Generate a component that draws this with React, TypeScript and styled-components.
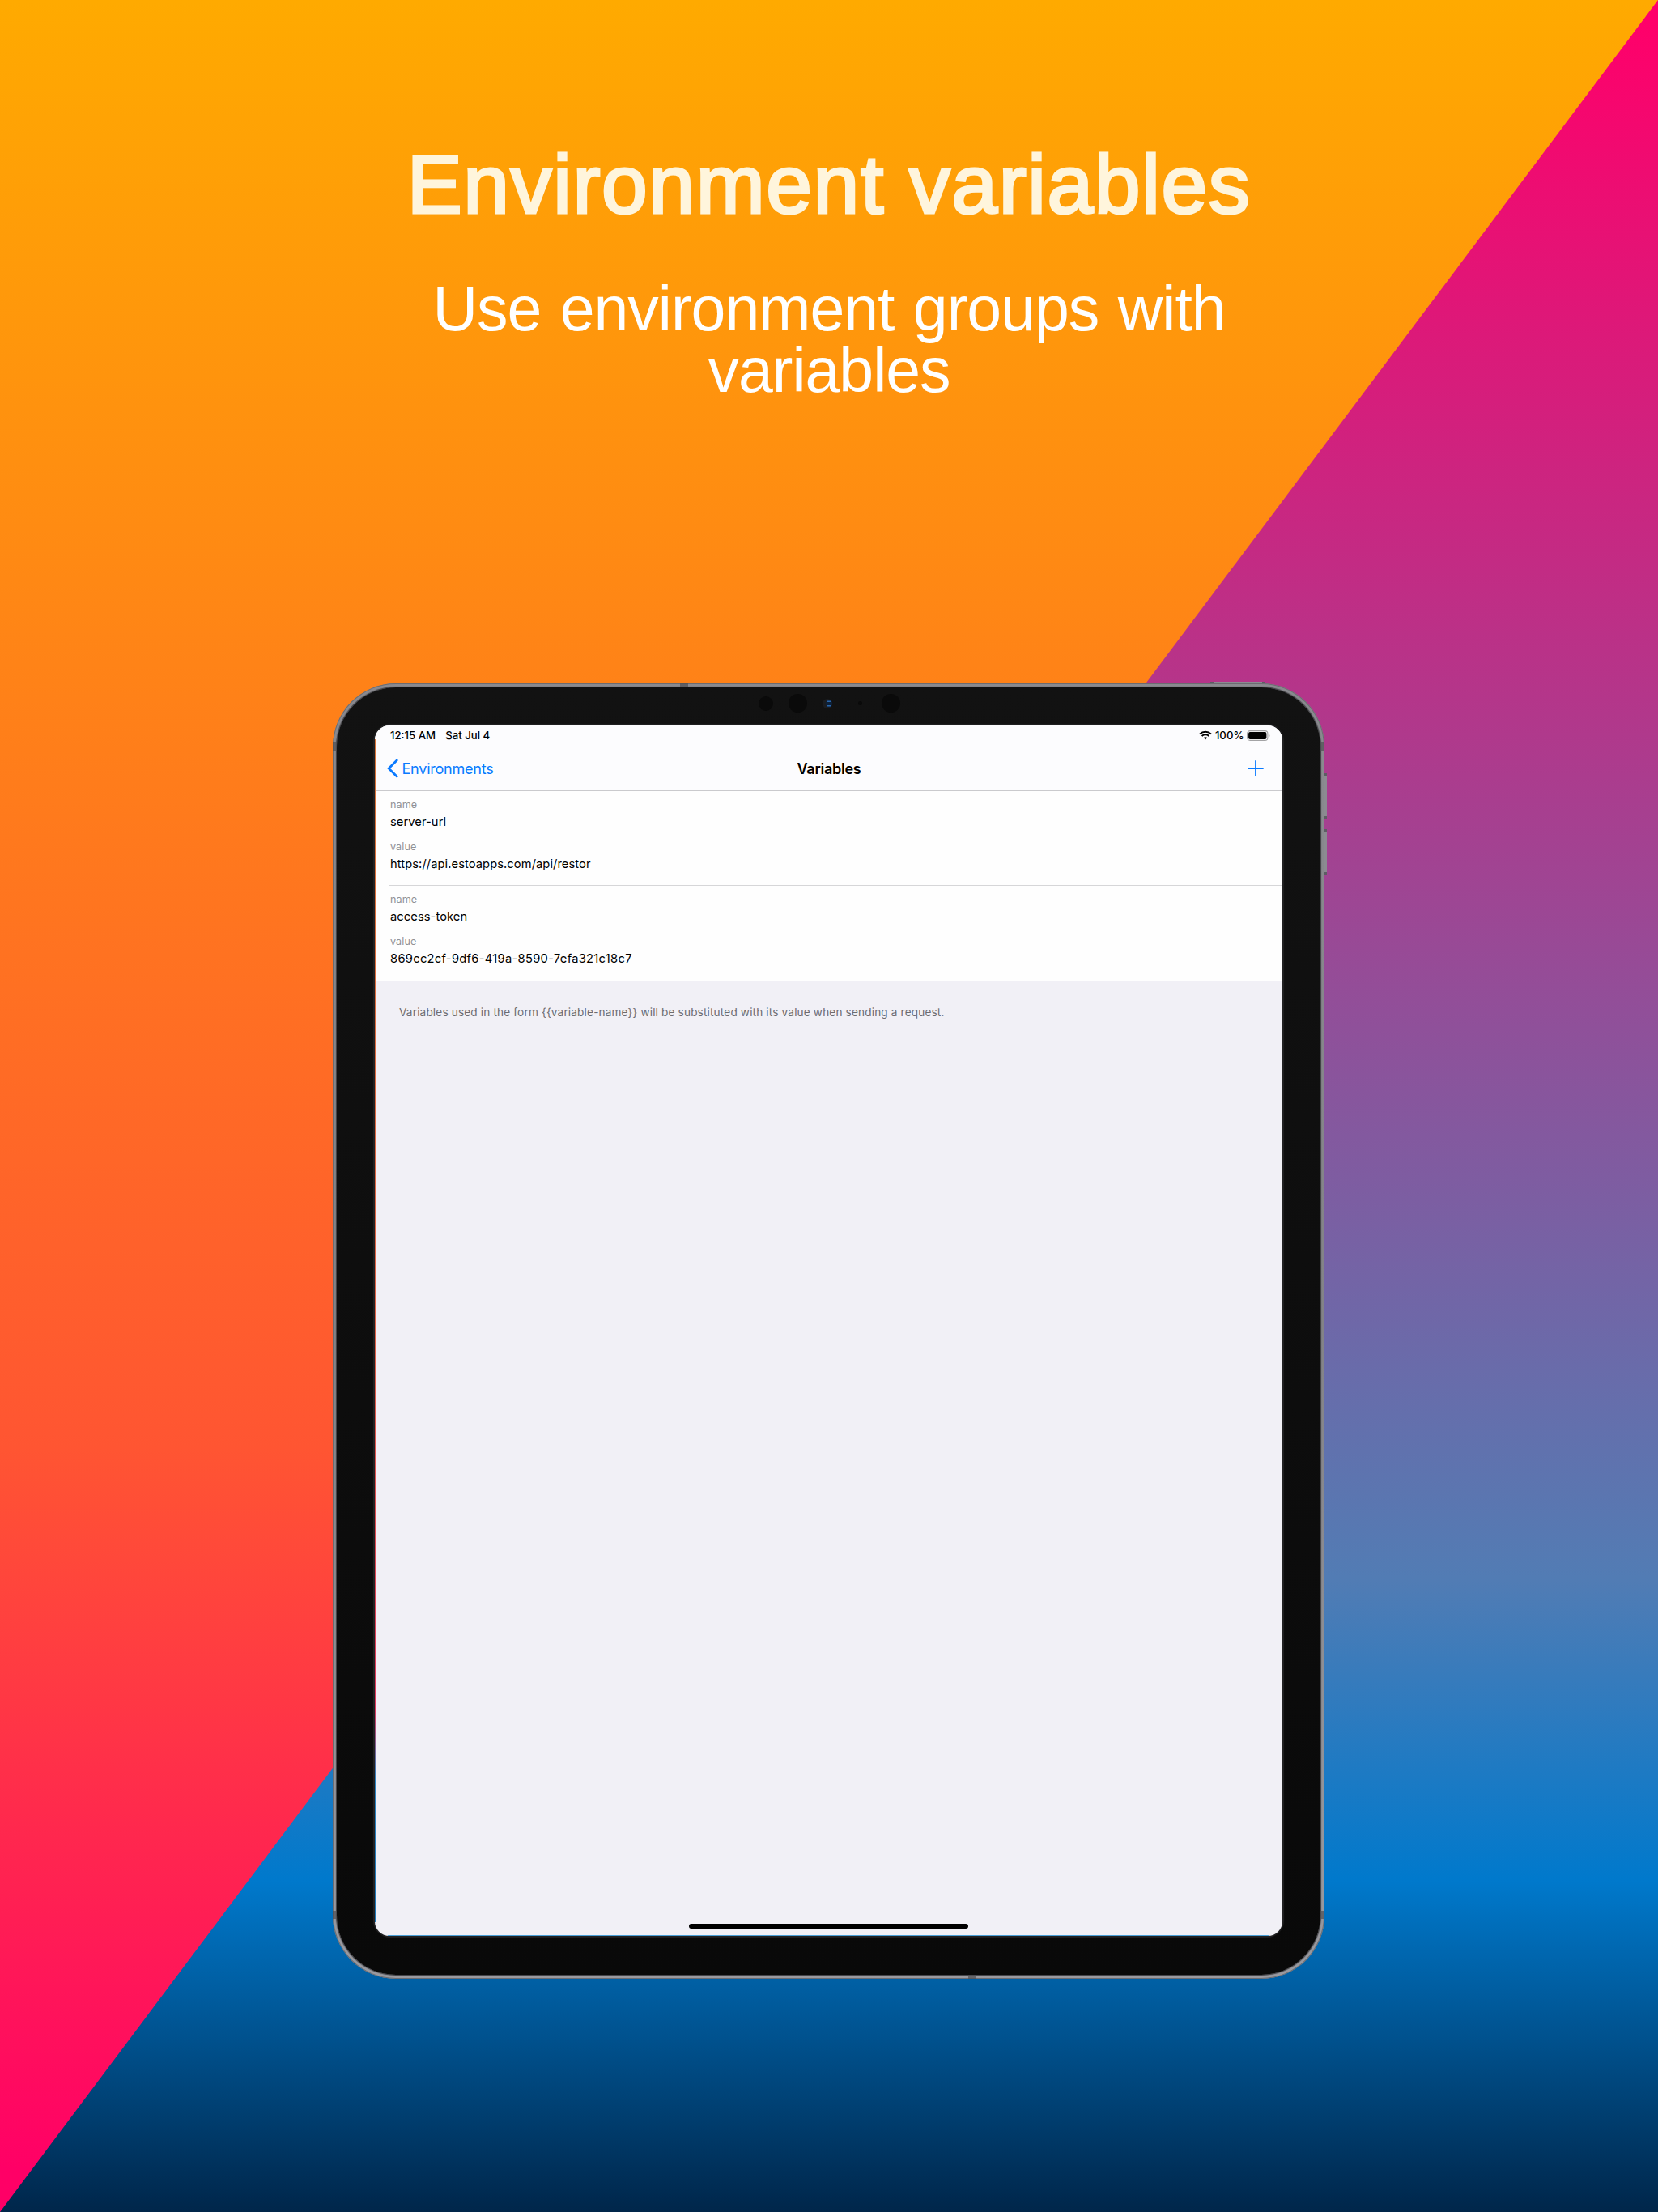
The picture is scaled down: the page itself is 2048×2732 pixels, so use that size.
import React from 'react';
import styled, { createGlobalStyle } from 'styled-components';

const Global = createGlobalStyle`
  *, *::before, *::after { box-sizing: border-box; }
  body { margin: 0; }
`;

const ui = `Inter, "Liberation Sans", sans-serif`;

const Poster = styled.main`
  position: relative;
  width: 2048px;
  height: 2732px;
  overflow: hidden;
  display: flex;
  flex-direction: column;
  align-items: center;
  background: linear-gradient(180deg, #ff006a 0%, #ff006a 1%, #527cb4 71.3%, #0079cc 85%, #00264a 100%);
`;

const Sunset = styled.div`
  position: absolute;
  inset: 0;
  background: linear-gradient(180deg, #ffaa00 0%, #ff5532 65.5%, #ff0066 98%);
  clip-path: polygon(0 0, 100% 0, 0 100%);
`;

const Copy = styled.header`
  position: relative;
  width: 1100px;
  height: 844px;
  padding-top: 169px;
  text-align: center;
  font-family: "Liberation Sans", Arial, sans-serif;
`;

const Title = styled.h1`
  margin: 0;
  font-size: 102px;
  line-height: 118px;
  font-weight: 400;
  letter-spacing: 1.6px;
  white-space: nowrap;
  color: #fff5dc;
  -webkit-text-stroke: 3.2px #fff5dc;
`;

const Subtitle = styled.p`
  margin: 56px 0 0;
  font-size: 77px;
  line-height: 76px;
  letter-spacing: -1px;
  word-spacing: 3px;
  color: #fff;
`;

const Tablet = styled.section`
  position: relative;
  width: 1225px;
  height: 1600px;
  flex: none;
  margin-right: 1px;
  padding: 5px;
  border-radius: 78px;
  background: linear-gradient(180deg, #8a8a8f, #828287 50%, #9a9aa0);
  box-shadow: inset 0 0 0 1px #6c6c71;
`;

const Bezel = styled.div`
  height: 100%;
  padding: 47px 47px 48px;
  border-radius: 73px;
  background: linear-gradient(180deg, #121212, #090909);
  box-shadow: 0 0 1px 1px #3c3c40;
`;

const Screen = styled.div`
  position: relative;
  height: 100%;
  display: flex;
  flex-direction: column;
  border-radius: 18px;
  overflow: hidden;
  background: #f1f0f6;
  font-family: ${ui};
  color: #000;

  &::before,
  &::after {
    content: '';
    position: absolute;
    left: 0;
    bottom: 0;
  }

  &::before {
    top: 17px;
    bottom: 17px;
    width: 1px;
    background: linear-gradient(180deg, #d9753a 0%, #e0634a 50%, #e03a60 82%, #2f86c4 88%, #1f78b8 100%);
  }

  &::after {
    left: 16px;
    right: 16px;
    height: 1px;
    background: #4aa0d8;
  }
`;

const ScreenRim = styled.div`
  height: 100%;
  border-radius: 19px;
  box-shadow: 0 0 1px 2px #222223;
`;

const StatusBar = styled.div`
  height: 26px;
  padding: 0 15px 2px 19px;
  display: flex;
  align-items: center;
  background: #fcfcfe;
  font-size: 13.2px;
  line-height: 16px;
  font-weight: 500;
`;

const Clock = styled.span`
  margin-right: 12px;
`;

const StatusIcons = styled.div`
  margin-left: auto;
  display: flex;
  align-items: center;
  gap: 3.5px;
`;

const NavBar = styled.nav`
  height: 55px;
  padding: 0 15px;
  display: grid;
  grid-template-columns: 1fr auto 1fr;
  align-items: center;
  background: #fcfcfe;
  border-bottom: 1px solid #cacacd;
`;

const Back = styled.div`
  display: flex;
  align-items: center;
  gap: 4.5px;
  color: #0a7aff;
  font-size: 18px;
  letter-spacing: -0.22px;
`;

const NavTitle = styled.h2`
  margin: 0;
  padding-left: 1px;
  font-size: 18px;
  font-weight: 600;
  letter-spacing: -0.25px;
`;

const Add = styled.div`
  display: flex;
  justify-content: flex-end;
  margin-right: 8px;
`;

const List = styled.ul`
  margin: 0;
  padding: 0 0 0 18px;
  list-style: none;
  background: #fefefe;
`;

const Item = styled.li<{ $last?: boolean }>`
  height: ${(p) => (p.$last ? 118 : 117)}px;
  padding-top: 7px;
  border-bottom: ${(p) => (p.$last ? 'none' : '1px solid #d6d6d8')};
`;

const Label = styled.div`
  height: 20px;
  padding-left: 1px;
  line-height: 20px;
  font-size: 12.6px;
  letter-spacing: 0.1px;
  color: #929296;
`;

const Value = styled.div<{ $spacing?: number }>`
  height: 32px;
  padding-left: 1px;
  line-height: 23px;
  font-size: 14.7px;
  letter-spacing: ${(p) => p.$spacing ?? 0.08}px;
`;

const Note = styled.p`
  margin: 28px 0 0 30px;
  font-size: 13.6px;
  line-height: 20px;
  letter-spacing: 0.16px;
  color: #6c6c71;
`;

const HomeBar = styled.div`
  width: 345px;
  height: 6px;
  margin: auto auto 9px;
  border-radius: 3px;
  background: #000;
`;

const Button = styled.i<{ $side: 'top' | 'right'; $at: number; $len: number }>`
  position: absolute;
  background: #8b8b91;
  border: 0 solid #5d5d63;
  ${(p) =>
    p.$side === 'top'
      ? `top: -2px; left: ${p.$at}px; width: ${p.$len}px; height: 2px; border-width: 0 4px;`
      : `right: -3px; top: ${p.$at}px; height: ${p.$len}px; width: 3px; border-width: 4px 0;`}
`;

const Antenna = styled.i<{ $x: number; $y: number; $w: number; $h: number }>`
  position: absolute;
  left: ${(p) => p.$x}px;
  top: ${(p) => p.$y}px;
  width: ${(p) => p.$w}px;
  height: ${(p) => p.$h}px;
  background: rgba(78, 78, 83, 0.7);
`;

const Sensor = styled.i<{ $x: number; $d: number }>`
  position: absolute;
  left: ${(p) => p.$x - p.$d / 2}px;
  top: ${(p) => 24.5 - p.$d / 2}px;
  width: ${(p) => p.$d}px;
  height: ${(p) => p.$d}px;
  border-radius: 50%;
  background: #0a0a0a;
`;

const CameraSvg = styled.svg`
  position: absolute;
  left: 605px;
  top: 18px;
`;

const variables = [
  { name: 'server-url', value: 'https://api.estoapps.com/api/restor' },
  { name: 'access-token', value: '869cc2cf-9df6-419a-8590-7efa321c18c7', spacing: 0.3 },
];

const Wifi = () => (
  <svg width="16" height="12" viewBox="0 0 16 12" fill="none" stroke="#000" strokeWidth="2">
    <path d="M1.1 4.4C5 .8 11 .8 14.9 4.4" />
    <path d="M3.6 7c2.5-2.3 6.3-2.3 8.8 0" />
    <path d="M8 11.4 5.7 9.1c1.3-1.1 3.3-1.1 4.6 0z" fill="#000" stroke="none" />
  </svg>
);

const Battery = () => (
  <svg width="29" height="13" viewBox="0 0 29 13">
    <rect x=".6" y=".6" width="25.3" height="11.8" rx="3.4" fill="none" stroke="#a3a3a5" strokeWidth="1.1" />
    <rect x="2.1" y="2.1" width="22.3" height="8.8" rx="1.9" />
    <path d="M27.2 4.4c1.7.6 1.7 3.6 0 4.2z" fill="#a3a3a5" />
  </svg>
);

export default function App() {
  return (
    <Poster>
      <Global />
      <Sunset />
      <Copy>
        <Title>Environment variables</Title>
        <Subtitle>Use environment groups with variables</Subtitle>
      </Copy>
      <Tablet>
        <Button $side="top" $at={1084} $len={68} />
        <Button $side="right" $at={111} $len={57} />
        <Button $side="right" $at={180} $len={57} />
        <Bezel>
          <ScreenRim>
            <Screen>
              <StatusBar>
                <Clock>12:15 AM</Clock>
                <span>Sat Jul 4</span>
                <StatusIcons>
                  <Wifi />
                  <span>100%</span>
                  <Battery />
                </StatusIcons>
              </StatusBar>
              <NavBar>
                <Back>
                  <svg width="14" height="24" viewBox="0 0 14 24" fill="none" stroke="#0a7aff" strokeWidth="2.8" strokeLinecap="round">
                    <path d="M12.2 2 2.2 12l10 10" />
                  </svg>
                  Environments
                </Back>
                <NavTitle>Variables</NavTitle>
                <Add>
                  <svg width="20" height="20" viewBox="0 0 20 20" stroke="#0a7aff" strokeWidth="1.8" strokeLinecap="round">
                    <path d="M10 1v18M1 10h18" />
                  </svg>
                </Add>
              </NavBar>
              <List>
                {variables.map((v, i) => (
                  <Item key={v.name} $last={i === variables.length - 1}>
                    <Label>name</Label>
                    <Value>{v.name}</Value>
                    <Label>value</Label>
                    <Value $spacing={v.spacing}>{v.value}</Value>
                  </Item>
                ))}
              </List>
              <Note>
                {'Variables used in the form {{variable-name}} will be substituted with its value when sending a request.'}
              </Note>
              <HomeBar />
            </Screen>
          </ScreenRim>
        </Bezel>
        <Antenna $x={429} $y={0} $w={10} $h={5} />
        <Antenna $x={785} $y={1595} $w={10} $h={5} />
        <Antenna $x={0} $y={73} $w={5} $h={10} />
        <Antenna $x={1220} $y={73} $w={5} $h={10} />
        <Antenna $x={0} $y={1516} $w={5} $h={10} />
        <Antenna $x={1220} $y={1516} $w={5} $h={10} />
        <Sensor $x={535} $d={18} />
        <Sensor $x={574} $d={23} />
        <Sensor $x={651} $d={5} />
        <Sensor $x={689} $d={23} />
        <CameraSvg width="14" height="14" viewBox="0 0 14 14">
          <circle cx="6" cy="7" r="6" fill="#1b1d20" />
          <circle cx="8" cy="7" r="4.2" fill="#0d2038" />
          <path d="M5.5 4.2h5M5.5 9.8h5" stroke="#2a67ad" strokeWidth="1.6" />
        </CameraSvg>
      </Tablet>
    </Poster>
  );
}
